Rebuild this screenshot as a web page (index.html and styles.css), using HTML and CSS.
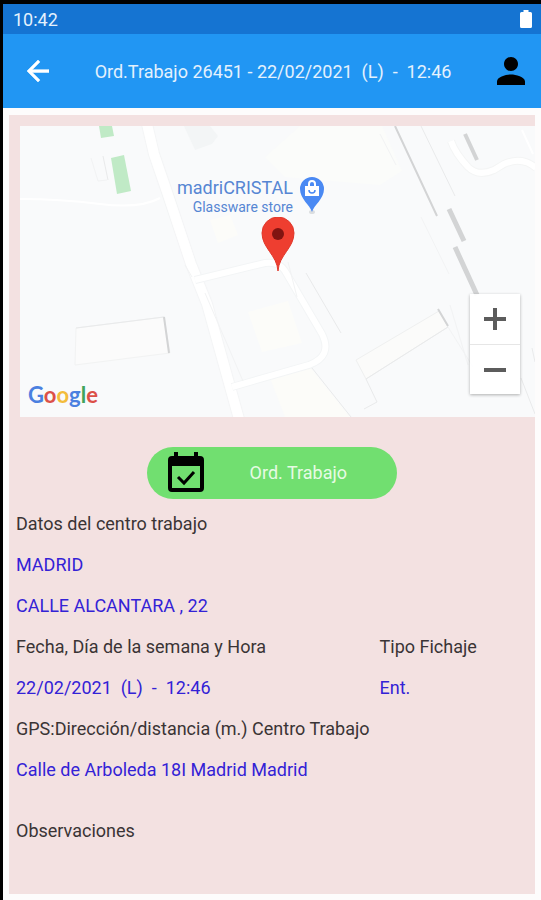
FILE: index.html
```html
<!DOCTYPE html>
<html lang="es">
<head>
    <meta charset="UTF-8">
    <meta name="viewport" content="width=device-width, initial-scale=1.0">
    <title>Ord.Trabajo 26451</title>
    <link rel="stylesheet" href="styles.css">
</head>
<body>
    <div class="screen">
        <div class="status-bar">
            <span>10:42</span>
            <svg class="battery" viewBox="0 0 12 18" aria-hidden="true">
                <path d="M3.500 0h5v2H10.500a1.500 1.500 0 0 1 1.500 1.500v13a1.500 1.500 0 0 1-1.500 1.500h-9A1.500 1.500 0 0 1 0 16.500v-13A1.500 1.500 0 0 1 1.500 2h2z" fill="#fff"/>
            </svg>
        </div>

        <header class="app-bar">
            <button class="icon-button" type="button" aria-label="Volver">
                <svg class="icon-back" viewBox="4 4 16 16">
                    <path d="M20 11H7.830l5.590-5.590L12 4l-8 8 8 8 1.410-1.410L7.830 13H20v-2z" fill="#fff" stroke="#fff" stroke-width="0.400"/>
                </svg>
            </button>
            <h1>Ord.Trabajo 26451 - 22/02/2021&nbsp; (L)&nbsp; -&nbsp; 12:46</h1>
            <button class="icon-button" type="button" aria-label="Usuario">
                <svg class="icon-user" viewBox="4 4 16 16">
                    <path d="M12 12c2.210 0 4-1.790 4-4s-1.790-4-4-4-4 1.790-4 4 1.790 4 4 4zm0 2c-2.670 0-8 1.340-8 4v2h16v-2c0-2.660-5.330-4-8-4z"/>
                </svg>
            </button>
        </header>

        <main class="card">
            <div class="map">
                <svg class="map-tiles" viewBox="20 126 515 291" preserveAspectRatio="xMidYMid slice" aria-hidden="true">
                    <rect x="20" y="126" width="515" height="291" fill="#f9fafb"/>
                    <!-- blocks -->
                    <path d="M300 126h82l20 45-22 14-95-8-20-20z" fill="#fbfcfa"/>
                    <path d="M184 126h26l8 10-6 8-17 6z" fill="#f3f5f6"/>
                    <path d="M248 312l40-11 14 42-40 9z" fill="#fcfcf9"/>
                    <path d="M270 378l40-11 40 50h-65z" fill="#fcfcf9"/>
                    <path d="M210 220l20-5 8 20-20 8z" fill="#fcfcf9"/>
                    <path d="M99 126h13l2 10-13 2z" fill="#c0eac6"/>
                    <path d="M111 158l13-3 7 36-14 3z" fill="#c0eac6"/>
                    <!-- roads -->
                    <g fill="none" stroke="#fff">
                        <path d="M147 124l7 30 13 38 24 72 16 40 32 115" stroke-width="12" stroke="#f4f5f6"/>
                        <path d="M147 124l7 30 13 38 24 72 16 40 32 115" stroke-width="10"/>
                        <path d="M195 280l70-17q14-2 20 8l37 63q11 22-13 31l-77 22" stroke-width="8" stroke="#f3f5f6"/>
                        <path d="M195 280l70-17q14-2 20 8l37 63q11 22-13 31l-77 22" stroke-width="6"/>
                        <path d="M451 141q4 12 17 26 10 10 26 3l10-6q18-8 32 4" stroke-width="8" stroke="#f4f5f5"/>
                        <path d="M451 141q4 12 17 26 10 10 26 3l10-6q18-8 32 4" stroke-width="6"/>
                        <path d="M522 130l11 24M20 199q40 0 80 5t60-6" stroke-width="2"/>
                    </g>
                    <!-- building edges -->
                    <path d="M76 328l88-11 6 36-95 12z" fill="#fbfbfb" stroke="#f2f3f3"/>
                    <path d="M356 360l83-49 9 16-82 52z" fill="#fbfbfa" stroke="#eff0f0"/>
                    <g fill="none" stroke="#e9eaeb">
                        <path d="M76 328l88-11M366 379l11 23-13 7M306 273l35 60M312 368l39 49M366 379l82-52"/>
                        <path d="M103 156l5 24M421 126l34 70M521 378l14 36M532 348l3 14"/>
                    </g>
                    <g fill="none" stroke="#f2f3f4">
                        <path d="M91 158l7 23 9-1M380 134l16 31M421 217l28 57M450 305l18 60"/>
                        <path d="M185 265l7 12M205 293l38 88M288 262l9 35M448 327l25 40"/>
                    </g>
                    <g fill="none" stroke="#d3d4d5">
                        <path d="M164 317l5 36M438 309l10 17M395 126l42 90" stroke-width="2"/>
                        <path d="M465 134l12 26" stroke-width="4"/>
                        <path d="M449 209l15 32M455 247l22 48" stroke-width="5"/>
                    </g>
                </svg>

                <div class="place">
                    <div class="place-label">
                        <span class="place-name">madriCRISTAL</span>
                        <span class="place-type">Glassware store</span>
                    </div>
                    <svg class="place-pin" viewBox="0 0 26 38" aria-hidden="true">
                        <ellipse cx="13" cy="36" rx="3" ry="2" fill="#dcdee0"/>
                        <path d="M13 36C11 29 1 23 1 13a12 12 0 0 1 24 0c0 10-10 16-12 23z" fill="#4a89f3"/>
                        <path d="M6 10h14v10H6z" fill="#fff"/>
                        <path d="M10 10V8a3 3 0 0 1 6 0v2" fill="none" stroke="#fff" stroke-width="2"/>
                        <path d="M10 14a3 3 0 0 0 6 0" fill="none" stroke="#4a89f3" stroke-width="1.500"/>
                    </svg>
                </div>

                <svg class="marker" viewBox="0 0 34 54" aria-label="Centro de trabajo">
                    <path d="M17 54C16 38 1 31 1 16a16 16 0 0 1 32 0c0 15-15 22-16 38z" fill="#ee3e30" stroke="#e2382b"/>
                    <circle cx="17" cy="17" r="6" fill="#811411"/>
                </svg>

                <div class="google-logo"><span class="g-blue">G</span><span class="g-red">o</span><span class="g-yellow">o</span><span class="g-blue">g</span><span class="g-green">l</span><span class="g-red">e</span></div>

                <div class="zoom-controls">
                    <button type="button" aria-label="Acercar">
                        <svg viewBox="0 0 22 22"><path d="M0 11h22M11 0v22" stroke="#5c5c5c" stroke-width="4"/></svg>
                    </button>
                    <button type="button" aria-label="Alejar">
                        <svg viewBox="0 0 22 22"><path d="M0 11h22" stroke="#5c5c5c" stroke-width="4"/></svg>
                    </button>
                </div>
            </div>

            <button class="order-button" type="button">
                <svg viewBox="0 0 36 40" aria-hidden="true">
                    <path d="M6 0h4v4h16V0h4v4h2a4 4 0 0 1 4 4v28a4 4 0 0 1-4 4H4a4 4 0 0 1-4-4V8a4 4 0 0 1 4-4h2zM4 14v22h28V14z"/>
                    <path d="M10 25l6 6 10-11" fill="none" stroke="#000" stroke-width="3"/>
                </svg>
                <span>Ord. Trabajo</span>
            </button>

            <dl class="details">
                <div class="field">
                    <dt>Datos del centro trabajo</dt>
                    <dd>MADRID</dd>
                    <dd>CALLE ALCANTARA , 22</dd>
                </div>
                <div class="field-row">
                    <div class="field">
                        <dt>Fecha, Día de la semana y Hora</dt>
                        <dd>22/02/2021&nbsp; (L)&nbsp; -&nbsp; 12:46</dd>
                    </div>
                    <div class="field">
                        <dt>Tipo Fichaje</dt>
                        <dd>Ent.</dd>
                    </div>
                </div>
                <div class="field">
                    <dt>GPS:Dirección/distancia (m.) Centro Trabajo</dt>
                    <dd>Calle de Arboleda 18I Madrid Madrid</dd>
                </div>
                <div class="field notes">
                    <dt>Observaciones</dt>
                    <dd></dd>
                </div>
            </dl>
        </main>
    </div>
</body>
</html>
```
FILE: styles.css
```css
* {
    margin: 0;
    padding: 0;
    box-sizing: border-box;
}

body {
    font-family: Roboto, 'Liberation Sans', Arial, sans-serif;
    font-size: 18px;
    color: #3a3435;
    background: #fdfcfc;
}

button {
    border: 0;
    background: none;
    font: inherit;
    cursor: pointer;
}

svg {
    display: block;
}

.screen {
    display: flow-root;
    min-height: 100vh;
    border-top: 4px solid #000;
    border-left: 3px solid #000;
}

.status-bar {
    display: flex;
    align-items: center;
    justify-content: space-between;
    height: 30px;
    padding: 0 9px 0 10px;
    background: #1574d2;
    color: #e4f1fd;
}

.battery {
    width: 12px;
    height: 18px;
}

.app-bar {
    display: flex;
    align-items: center;
    justify-content: space-between;
    height: 74px;
    padding: 0 16px 0 24px;
    background: #2196f3;
}

.app-bar h1 {
    font-size: 18px;
    font-weight: 400;
    color: #e4f1fd;
}

.icon-back {
    width: 22px;
    height: 22px;
}

.icon-user {
    width: 28px;
    height: 28px;
}

.card {
    margin: 7px 6px 6px;
    padding: 11px 0 2px;
    background: #f3e1e1;
}

.map {
    position: relative;
    height: 291px;
    margin-left: 11px;
    overflow: hidden;
}

.map-tiles {
    width: 100%;
    height: 100%;
}

.place {
    position: absolute;
    top: 50px;
    right: 210px;
    display: flex;
    gap: 6px;
}

.place-label {
    display: flex;
    flex-direction: column;
    align-items: flex-end;
    padding-top: 2px;
    color: #5686d3;
}

.place-name {
    font-size: 18px;
    line-height: 20px;
}

.place-type {
    font-size: 14px;
    line-height: 18px;
}

.place-pin {
    width: 26px;
    height: 38px;
}

.marker {
    position: absolute;
    top: 91px;
    left: calc(50% - 17px);
    width: 34px;
    height: 54px;
}

.google-logo {
    position: absolute;
    left: 8px;
    bottom: 8px;
    font-family: Lato, sans-serif;
    font-size: 22px;
    font-weight: 700;
    line-height: 28px;
}

.g-blue {
    color: #4b80e0;
}

.g-red {
    color: #dc5048;
}

.g-yellow {
    color: #f3bc3c;
}

.g-green {
    color: #41a45b;
}

.zoom-controls {
    position: absolute;
    right: 15px;
    bottom: 23px;
    width: 50px;
    background: rgba(255, 255, 255, 0.9);
    box-shadow: 0 1px 3px rgba(0, 0, 0, 0.3);
}

.zoom-controls button {
    display: flex;
    align-items: center;
    justify-content: center;
    width: 50px;
    height: 50px;
}

.zoom-controls button + button {
    border-top: 1px solid #e6e6e6;
}

.zoom-controls svg {
    width: 22px;
    height: 22px;
}

.order-button {
    display: flex;
    align-items: center;
    justify-content: space-between;
    width: 250px;
    height: 52px;
    margin: 30px auto 4px;
    padding: 0 50px 2px 21px;
    border-radius: 26px;
    background: #71df70;
    color: #e6fbe4;
}

.order-button svg {
    width: 36px;
    height: 40px;
}

.details {
    padding: 0 7px;
    line-height: 41px;
}

.details dd {
    min-height: 41px;
    color: #3322d6;
}

.field-row {
    display: grid;
    grid-template-columns: 71% 1fr;
}

.notes {
    margin-top: 20px;
}
```
